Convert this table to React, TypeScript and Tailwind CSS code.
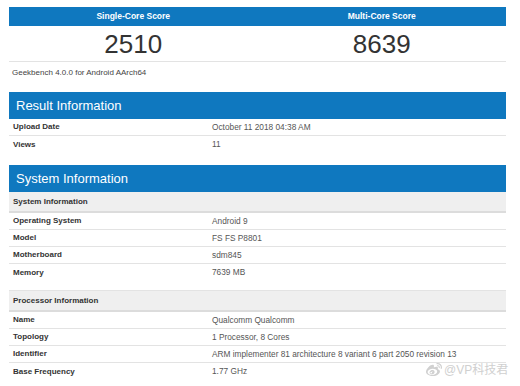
import React from "react";
import { FaWeibo } from "react-icons/fa";

const blue = "bg-[#0f78bf]";

function Row({ label, value, last }: { label: string; value: string; last?: boolean }) {
  return (
    <div className={`flex h-[17px] items-center ${last ? "" : "border-b border-[#e3e3e3]"}`}>
      <div className="w-[203px] shrink-0 pl-[4px] text-[8px] font-bold text-[#333]">{label}</div>
      <div className="whitespace-nowrap text-[8.3px] text-[#555]">{value}</div>
    </div>
  );
}

function Bar({ title }: { title: string }) {
  return (
    <div className={`${blue} flex h-[27px] items-center pl-[7px] text-[13px] text-white`}>{title}</div>
  );
}

function SubHead({ title }: { title: string }) {
  return (
    <div className="flex h-[21px] items-center bg-[#efefef] border-b-2 border-[#dcdcdc] pl-[4px] text-[8px] font-bold text-[#333]">
      {title}
    </div>
  );
}

export default function App() {
  return (
    <div
      className="relative h-[386px] w-[520px] overflow-hidden bg-white pt-[7px]"
      style={{ fontFamily: '"Liberation Sans", Arial, sans-serif' }}
    >
      <div className="ml-[9px] w-[497px]">
        <div className={`${blue} flex h-[19px] items-center text-[8.5px] font-bold text-white`}>
          <div className="flex-1 text-center">Single-Core Score</div>
          <div className="flex-1 text-center">Multi-Core Score</div>
        </div>
        <div className="flex h-[36px] items-center border-b border-[#e3e3e3] text-[26px] leading-none text-[#333]">
          <div className="flex-1 text-center">2510</div>
          <div className="flex-1 text-center">8639</div>
        </div>
        <div className="h-[23px] pl-[3px] pt-[5px] text-[8px] text-[#444]">Geekbench 4.0.0 for Android AArch64</div>
        <div className="h-[7px]" />
        <Bar title="Result Information" />
        <Row label="Upload Date" value="October 11 2018 04:38 AM" />
        <Row label="Views" value="11" last />
        <div className="h-[12px]" />
        <Bar title="System Information" />
        <SubHead title="System Information" />
        <Row label="Operating System" value="Android 9" />
        <Row label="Model" value="FS FS P8801" />
        <Row label="Motherboard" value="sdm845" />
        <Row label="Memory" value="7639 MB" last />
        <div className="h-[10px] border-b border-[#e3e3e3]" />
        <SubHead title="Processor Information" />
        <Row label="Name" value="Qualcomm Qualcomm" />
        <Row label="Topology" value="1 Processor, 8 Cores" />
        <Row label="Identifier" value="ARM implementer 81 architecture 8 variant 6 part 2050 revision 13" />
        <Row label="Base Frequency" value="1.77 GHz" last />
      </div>
      <div className="absolute left-[426px] top-[362px] flex items-center gap-[2px] whitespace-nowrap text-[#d0d0d0]">
        <FaWeibo className="h-[16px] w-[16px]" />
        <span className="text-[12px] leading-none" style={{ fontFamily: '"Liberation Sans", "Noto Sans CJK SC", sans-serif' }}>
          @VP科技君
        </span>
      </div>
    </div>
  );
}
